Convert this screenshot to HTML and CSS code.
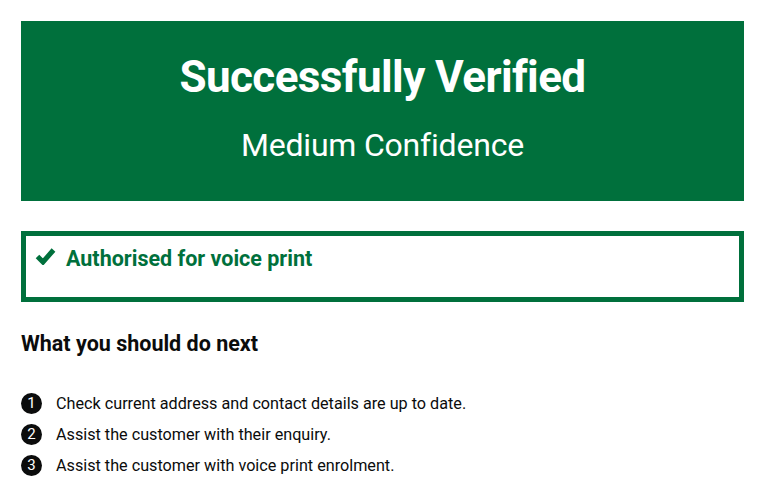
FILE: index.html
```html
<!DOCTYPE html>
<html lang="en">
<head>
<meta charset="utf-8">
<title>Successfully Verified</title>
<link rel="stylesheet" href="styles.css">
</head>
<body>
<main class="page">
  <div class="panel">
    <h1 class="panel-title">Successfully Verified</h1>
    <div class="panel-body">Medium Confidence</div>
  </div>
  <div class="notice">
    <svg class="tick" width="21" height="18" viewBox="0 0 21 18" aria-hidden="true">
      <polyline points="2.5,9.5 8,15 18.5,3" fill="none" stroke="#00703c" stroke-width="5" stroke-linejoin="miter" stroke-linecap="butt"/>
    </svg>
    <span class="notice-text">Authorised for voice print</span>
  </div>
  <h2 class="heading">What you should do next</h2>
  <ol class="steps">
    <li class="step"><span class="num">1</span><span class="step-text">Check current address and contact details are up to date.</span></li>
    <li class="step"><span class="num">2</span><span class="step-text">Assist the customer with their enquiry.</span></li>
    <li class="step"><span class="num">3</span><span class="step-text">Assist the customer with voice print enrolment.</span></li>
  </ol>
</main>
</body>
</html>
```

FILE: styles.css
```css
html, body {
  margin: 0;
  padding: 0;
  background: #ffffff;
}
body {
  font-family: Roboto, "Liberation Sans", Arial, sans-serif;
  color: #0b0c0c;
}
.page {
  padding: 21px 20px 0 21px;
}
.panel {
  box-sizing: border-box;
  height: 180px;
  background: #00703c;
  color: #ffffff;
  text-align: center;
  padding-top: 28px;
}
.panel-title {
  margin: 0;
  font-size: 44px;
  line-height: 56px;
  font-weight: 700;
  letter-spacing: -0.6px;
}
.panel-body {
  margin-top: 20px;
  font-size: 32px;
  line-height: 40px;
  font-weight: 400;
  letter-spacing: -0.2px;
}
.notice {
  box-sizing: border-box;
  margin-top: 30px;
  height: 71px;
  border: 5px solid #00703c;
  display: flex;
  align-items: flex-start;
  padding: 12px 0 0 9px;
  gap: 10px;
}
.tick {
  flex: none;
  margin-top: -1px;
}
.notice-text {
  color: #00703c;
  font-weight: 700;
  font-size: 21.5px;
  line-height: 22px;
}
.heading {
  margin: 29px 0 0;
  font-size: 21.5px;
  line-height: 25px;
  font-weight: 700;
}
.steps {
  list-style: none;
  margin: 37px 0 0;
  padding: 0;
  display: flex;
  flex-direction: column;
  gap: 10px;
}
.step {
  display: flex;
  align-items: center;
  gap: 14px;
  height: 21px;
}
.num {
  flex: none;
  width: 21px;
  height: 21px;
  border-radius: 50%;
  background: #0b0c0c;
  color: #ffffff;
  font-size: 15px;
  line-height: 21px;
  text-align: center;
}
.step-text {
  font-size: 16.2px;
  line-height: 21px;
}
```
